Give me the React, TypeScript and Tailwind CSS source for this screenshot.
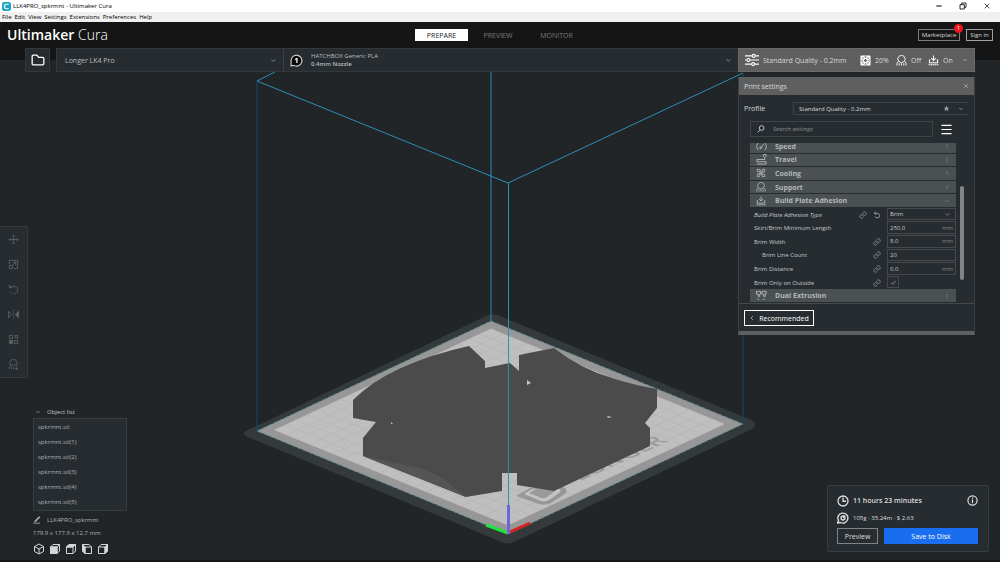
import type { ReactNode } from "react";

type P = { className?: string };

function Svg({ children, className = "size-3" }: { children: ReactNode; className?: string }) {
  return (
    <svg viewBox="0 0 24 24" className={`shrink-0 ${className}`} fill="none" stroke="currentColor" strokeWidth="2" aria-hidden="true">
      {children}
    </svg>
  );
}

const ChevronDown = ({ className = "size-[7px]" }: P) => <Svg className={className}><path d="M5 8l7 7 7-7" /></Svg>;
const ChevronLeft = ({ className = "size-2" }: P) => <Svg className={className}><path d="M16 4l-8 8 8 8" /></Svg>;
const CloseIcon = ({ className = "size-2" }: P) => <Svg className={className}><path d="M5 5l14 14M19 5L5 19" /></Svg>;
const FolderIcon = ({ className }: P) => (
  <Svg className={className}><path d="M2 5.5a2 2 0 0 1 2-2h6l3 4h7a2 2 0 0 1 2 2v9a2 2 0 0 1-2 2H4a2 2 0 0 1-2-2z" strokeWidth="2.2" /></Svg>
);
const SlidersIcon = ({ className }: P) => (
  <Svg className={className}><path d="M0 5h12M18 5h6M0 12h3M9 12h15M0 19h11M17 19h7" /><circle cx="15" cy="5" r="2.6" /><circle cx="6" cy="12" r="2.6" /><circle cx="14" cy="19" r="2.6" /></Svg>
);
const InfillIcon = ({ className }: P) => (
  <Svg className={className}>
    <rect x="1" y="1" width="22" height="22" rx="2" fill="currentColor" stroke="none" />
    <g fill="#5f5f5f" stroke="none"><path d="M12 8l4 4-4 4-4-4zM9 3.500h6l-3 3zM9 20.500h6l-3-3zM3.500 9v6l3-3zM20.500 9v6l-3-3z" /><circle cx="6.500" cy="6.500" r="1.500" /><circle cx="17.500" cy="6.500" r="1.500" /><circle cx="6.500" cy="17.500" r="1.500" /><circle cx="17.500" cy="17.500" r="1.500" /></g>
  </Svg>
);
const SupportIcon = ({ className }: P) => (
  <Svg className={className}><path d="M6 14a8 8 0 1 1 12 0l-6 3zM5 14l-3 4v5M19 14l3 4v5M7 23v-5M12 23v-5M17 23v-5" /></Svg>
);
const AdhesionIcon = ({ className }: P) => (
  <Svg className={className}><path d="M12 1v11M7 7l5 5 5-5M5 11H3v6h18v-6h-2" strokeWidth="2.200" /><path d="M1 21h22M3 19v4M8 19v4M12 19v4M16 19v4M21 19v4" strokeWidth="1.200" /></Svg>
);
const SpeedIcon = ({ className }: P) => (
  <Svg className={className}><path d="M5 20a12 12 0 0 1 0-16M19 20a12 12 0 0 0 0-16M10 15l7-8" /><circle cx="10" cy="15" r="2" /></Svg>
);
const TravelIcon = ({ className }: P) => (
  <Svg className={className}><path d="M16 1h6v4l-3 3-3-3zM2 12h17M19 8v4M2 22h20v-5H2v-5" /></Svg>
);
const FanIcon = ({ className }: P) => (
  <Svg className={className}><circle cx="12" cy="12" r="2.500" /><path d="M10 10L3 8V3l7 1zM14 10l2-7h5l-1 7zM14 14l7 2v5l-7-1zM10 14l-2 7H3l1-7z" /></Svg>
);
const DualIcon = ({ className }: P) => (
  <Svg className={className}><path d="M1 3h9v6H8v5H5V9H1zM13 3h9v6h-2v5h-3V9h-4zM3 20h4M15 20h4" /></Svg>
);
const LinkIcon = ({ className }: P) => (
  <Svg className={className}><path d="M10 13a5 5 0 0 0 7.500.5l3-3a5 5 0 0 0-7-7L11.700 5.200M14 11a5 5 0 0 0-7.500-.5l-3 3a5 5 0 0 0 7 7l1.800-1.700" /></Svg>
);
const ResetIcon = ({ className }: P) => (
  <Svg className={className}><path d="M8 2L4 7l5 4M4 7h9a7 7 0 1 1-7 9" strokeWidth="2.400" /></Svg>
);
const StarIcon = ({ className }: P) => (
  <Svg className={className}><path d="M12 2l3 7 7 .5-5.500 4.500 2 7.500L12 17.500 5.500 21.500l2-7.500L2 9.500 9 9z" fill="currentColor" stroke="none" /></Svg>
);
const ClockIcon = ({ className }: P) => <Svg className={className}><circle cx="12" cy="12" r="10" strokeWidth="2.600" /><path d="M12 5v7.500h6" strokeWidth="2.600" /></Svg>;
const SpoolIcon = ({ className }: P) => (
  <Svg className={className}><path d="M1 22l2-5a10 10 0 1 1 4 4z" strokeWidth="2.800" /><circle cx="12" cy="12" r="4" strokeWidth="2.600" /><path d="M12 12l4-5" strokeWidth="2.600" /></Svg>
);
const InfoIcon = ({ className }: P) => <Svg className={className}><circle cx="12" cy="12" r="10" strokeWidth="2.600" /><path d="M12 10v8M12 5.500v2.500" strokeWidth="2.600" /></Svg>;
const PencilIcon = ({ className }: P) => (
  <Svg className={className}><path d="M5 14L18 1l4 3L9 17l-6 2z" fill="currentColor" stroke="none" /><path d="M1 21.500h20" strokeWidth="2.500" /></Svg>
);

const MoveIcon = ({ className }: P) => (
  <Svg className={className}><path d="M12 3v18M3 12h18M9 5l3-3 3 3M9 19l3 3 3-3M5 9l-3 3 3 3M19 9l3 3-3 3" /></Svg>
);
const ScaleIcon = ({ className }: P) => (
  <Svg className={className}><path d="M3 11V3h18v18h-8M3 14h7v7H3zM11 13l6-6M11 7h6v6" /></Svg>
);
const RotateIcon = ({ className }: P) => (
  <Svg className={className}><path d="M3 2v6h7M4 7c9-5 17 0 17 6 0 5-4 8-8 8" /><path d="M11 21c-4 0-8-3-8-8" strokeDasharray="2 2" /></Svg>
);
const MirrorIcon = ({ className }: P) => (
  <Svg className={className}><path d="M1 5v14l7-7z" /><path d="M23 5v14l-7-7z" fill="currentColor" /><path d="M12 2v20" strokeDasharray="3 2" /></Svg>
);
const MeshIcon = ({ className }: P) => (
  <Svg className={className}><path d="M3 3h7v7H3zM14 14h7v7h-7zM14 3h7v7M14 4l6 6M14 9l2-2" /><path d="M3 14h7v7H3z" fill="currentColor" /></Svg>
);
const BlockerIcon = ({ className }: P) => (
  <Svg className={className}><path d="M6 14a8 8 0 1 1 12 0M3 22v-4l5-5h8l3 3M8 22v-4M12 22v-4" /><path d="M15 21h7M18.500 18v6" /></Svg>
);

function CubeIcon({ face }: { face: "iso" | "front" | "top" | "left" | "right" }) {
  if (face === "iso") {
    return <Svg className="size-3"><path d="M12 2l9 5v10l-9 5-9-5V7zM3 7l9 5 9-5M12 12v10" /></Svg>;
  }
  if (face === "left") {
    return (
      <Svg className="size-3">
        <path d="M3 3h13l5 5v13H8l-5-5zM8 8h13M8 8v13" />
        <path d="M3 3l5 5v13l-5-5z" fill="currentColor" />
      </Svg>
    );
  }
  return (
    <Svg className="size-3">
      <path d="M3 8l5-5h13v13l-5 5H3zM3 8h13v13M16 8l5-5" />
      {face === "front" && <path d="M3 8h13v13H3z" fill="currentColor" />}
      {face === "top" && <path d="M3 8l5-5h13l-5 5z" fill="currentColor" />}
      {face === "right" && <path d="M16 8l5-5v13l-5 5z" fill="currentColor" />}
    </Svg>
  );
}

type Pt = [number, number];
const BED: Pt[] = [[275, 430], [491, 329], [724, 424], [508, 525]];
const mix = (a: Pt, b: Pt, t: number): Pt => [a[0] + (b[0] - a[0]) * t, a[1] + (b[1] - a[1]) * t];

function Scene() {
  const lines: string[] = [];
  const n = 20;
  for (let i = 1; i < n; i++) {
    const t = i / n;
    const [a, b] = [mix(BED[0], BED[1], t), mix(BED[3], BED[2], t)];
    const [c, d] = [mix(BED[0], BED[3], t), mix(BED[1], BED[2], t)];
    lines.push(`M${a}L${b}M${c}L${d}`);
  }
  return (
    <svg viewBox="0 0 1000 562" preserveAspectRatio="xMidYMid slice" className="absolute inset-0 size-full" role="img" aria-label="Build plate with model">
      <path d="M248 430L486 316Q491 313 497 315L751 420Q759 425 752 429L514 542Q508 545 502 542L248 437Q240 433 248 430Z" fill="#34393c" />
      <path d="M257 431L491 321L743 424L508 534Z" fill="#979797" stroke="#5f8590" strokeWidth="1" strokeDasharray="4 2" />
      <path d="M275 430L491 329L724 424L508 525Z" fill="#bfbfbf" stroke="#c9c3c0" strokeWidth="0.6" />
      <path d={lines.join("")} stroke="#b3b3b3" strokeWidth="0.6" />
      <path d="M516 496L530 488L563 487Q569 490 565 494L551 503Q545 506 539 504Z" fill="#989898" />
      <path d="M524 494L532 489L557 488Q563 490 559 493L549 500Q545 502 541 501Z" fill="#c4c4c4" />
      <path d="M529 493L536 489L552 488Q557 490 554 492L547 497Q544 499 541 498Z" fill="#9b9b9b" />
      <text transform="matrix(.92 -.41 .88 .36 580 481)" className="font-['Open_Sans',sans-serif] text-[24px] font-semibold" fill="#9c9c9c">LONGER</text>
      <path d="M353 400Q372 381 401 368Q432 354 469 346L485 361V368L510 363L519 371V355L554 348Q580 369 615 379Q634 385 657 389V408L645 423L650 428V446L554 491L517 485V473H502V491L466 497L363 456V438L376 422L353 418Z" fill="#4b4b4b" />
      <path d="M363 456L395 463Q430 468 447 482L466 497Z" fill="#555" />
      <path d="M527 380l4 3-4 2zM607 416l5 1-4 1zM391 422l2 2h-2z" fill="#c4c4c4" />
      <g fill="none" stroke="#2c8fb5">
        <path d="M275 72L257 81L508 183L743 73" />
        <path d="M257 81V431M743 73V424" stroke="#0e4e63" />
        <path d="M491 60V321M508.500 183V508" />
      </g>
      <path d="M508 533L486 525" stroke="#23e33a" strokeWidth="3" />
      <path d="M508 533L530 523" stroke="#d81f22" strokeWidth="3" />
      <path d="M508.500 505V534" stroke="#6a67dc" strokeWidth="3" />
    </svg>
  );
}

function TitleBar() {
  return (
    <div className="relative flex h-3 items-center bg-white pl-0.5 text-[6px] text-black">
      <svg viewBox="0 0 16 16" className="mr-0.5 size-[9px]" aria-hidden="true">
        <rect width="16" height="16" rx="4" fill="#18a6c4" />
        <path d="M12 4H7L4.500 6v4L7 12h5" stroke="#fff" strokeWidth="2.200" fill="none" />
      </svg>
      <span className="flex-1">LLK4PRO_spkrmnt - Ultimaker Cura</span>
      <div className="flex gap-4 pr-[9px]">
        <button aria-label="Minimise" className="size-2"><Svg className="size-2"><path d="M4 12h16" strokeWidth="3" /></Svg></button>
        <button aria-label="Restore" className="size-2"><Svg className="size-2"><path d="M3 8h13v13H3zM8 8V3h13v13h-5" strokeWidth="2.500" /></Svg></button>
        <button aria-label="Close" className="size-2"><CloseIcon /></button>
      </div>
    </div>
  );
}

function MenuBar() {
  return (
    <nav className="relative flex h-[10px] items-center gap-[3px] bg-[#f0f0f0] pl-0.5 text-[6px] text-black">
      {["File", "Edit", "View", "Settings", "Extensions", "Preferences", "Help"].map((m) => (
        <button key={m}>{m}</button>
      ))}
    </nav>
  );
}

function Header() {
  return (
    <header className="relative grid h-[26px] grid-cols-[1fr_auto_1fr] items-center bg-[#151515] px-[7px] text-[7px]">
      <h1 className="text-[14px] leading-none font-light text-white"><b className="font-semibold">Ultimaker</b> Cura</h1>
      <div className="flex text-[#7c7c7c]">
        <button className="h-3 w-[53px] bg-white text-[#222]">PREPARE</button>
        <button className="h-3 w-[60px]">PREVIEW</button>
        <button className="h-3 w-[57px]">MONITOR</button>
      </div>
      <div className="flex justify-end gap-1.5 text-[6px] text-[#d6d6d6]">
        <button className="relative h-3 w-[42px] border border-[#7d7d7d]">
          Marketplace
          <span className="absolute -top-1.5 -right-1 size-[9px] rounded-full bg-[#e9151b] text-center leading-[9px] text-white">1</span>
        </button>
        <button className="h-3 w-[27px] border border-[#a0a0a0]">Sign in</button>
      </div>
    </header>
  );
}

function StageBar() {
  return (
    <div className="relative flex h-6 bg-[linear-gradient(#151515_50%,transparent_50%)] px-[25px] text-[7px] text-[#b9bdbf]">
      <button aria-label="Open file" className="mr-1.5 flex w-[25px] items-center justify-center border border-[#34383b] bg-[#272c30] text-white">
        <FolderIcon className="size-[14px]" />
      </button>
      <div className="flex flex-1 border-y border-l border-[#34383b] bg-[#272c30]">
        <button className="flex w-1/3 items-center justify-between border-r border-[#3c4043] pr-1.5 pl-2 text-left">
          Longer LK4 Pro <ChevronDown />
        </button>
        <button className="flex flex-1 items-center pr-1.5 pl-1.5 text-left text-[6px]">
          <svg viewBox="0 0 24 24" className="mr-2 size-[13px]" aria-hidden="true">
            <path d="M2 22V12a10 10 0 1 1 5 9z" fill="#080808" stroke="#d8d8d8" strokeWidth="2" />
            <text x="12" y="17" textAnchor="middle" fill="#fff" className="text-[14px] font-bold">1</text>
          </svg>
          <span className="flex-1 leading-2">HATCHBOX Generic PLA<br /><b className="font-semibold">0.4mm Nozzle</b></span>
          <ChevronDown />
        </button>
      </div>
      <button className="flex w-[237px] items-center border border-[#6a6a6a] bg-[#5f5f5f] px-1.5 text-left text-[#d9d9d9]">
        <SlidersIcon className="mr-1 size-[14px] text-white" />
        <span className="flex-1">Standard Quality - 0.2mm</span>
        <InfillIcon className="mr-1 size-[11px] text-white" /><span className="w-[21px]">20%</span>
        <SupportIcon className="mr-1 size-[11px] text-white" /><span className="w-[17px]">Off</span>
        <AdhesionIcon className="mr-1 size-[11px] text-white" /><span className="w-[19px]">On</span>
        <ChevronDown className="size-[6px]" />
      </button>
    </div>
  );
}

function Category({ icon, name, open = false }: { icon: ReactNode; name: string; open?: boolean }) {
  return (
    <div className="pb-px">
      <button className="flex size-full items-center bg-[#4b5052] pr-1.5 pl-1.5 text-left text-[7px] font-bold text-[#b4b8ba]">
        <span className="w-[19px]">{icon}</span>
        <span className="flex-1">{name}</span>
        {open ? <ChevronDown className="size-[6px] text-[#8b9092]" /> : <ChevronLeft className="size-[6px] text-[#8b9092]" />}
      </button>
    </div>
  );
}

function SettingRow({ id, label, icons, indent = false, italic = false, children }: {
  id: string; label: string; icons?: ReactNode; indent?: boolean; italic?: boolean; children: ReactNode;
}) {
  return (
    <div className="flex items-center pl-1 text-[6px] text-[#c6c9cb]">
      <label htmlFor={id} className={`flex-1 ${indent ? "pl-2" : ""} ${italic ? "italic" : ""}`}>{label}</label>
      <span className="mr-1.5 flex gap-1.5 text-[#a9adaf]">{icons}</span>
      <div className="flex h-full w-[69px] pb-px">{children}</div>
    </div>
  );
}

function Value({ id, value, unit }: { id: string; value: string; unit?: string }) {
  return (
    <div className="flex w-full items-center border border-[#45494c] px-0.5">
      <input id={id} defaultValue={value} className="w-0 flex-1 bg-transparent outline-none" />
      {unit && <span className="text-[#84888a]">{unit}</span>}
    </div>
  );
}

function SettingsPanel() {
  const link = <LinkIcon className="size-2" />;
  return (
    <section className="w-[237px] border border-[#3c4043] border-t-0 border-b-4 border-b-[#5f5f5f] bg-[#272c30] text-[7px] text-[#d8dadb]">
      <div className="flex h-[18px] items-center justify-between bg-[#5f5f5f] px-[5px]">
        <h2>Print settings</h2>
        <button aria-label="Close print settings"><CloseIcon className="size-[6px]" /></button>
      </div>
      <div className="mt-[7px] flex h-[13px] items-center pr-1.5 pl-[5px]">
        <label htmlFor="profile" className="w-[49px]">Profile</label>
        <div className="flex h-full flex-1 items-center border border-r-0 border-[#3f4346] pr-1">
          <select id="profile" className="flex-1 appearance-none bg-transparent pl-[5px] text-[6px] outline-none">
            <option>Standard Quality - 0.2mm</option>
          </select>
          <StarIcon className="mr-2 size-[7px] text-[#9a9ea0]" />
          <ChevronDown className="size-[6px]" />
        </div>
      </div>
      <div className="mt-1.5 flex h-4 items-center pr-[22px] pl-[11px]">
        <div className="flex h-full flex-1 items-center border border-[#3f4346] px-1.5">
          <Svg className="mr-2 size-2"><circle cx="14" cy="9" r="7" strokeWidth="2.500" /><path d="M9 15l-7 7" strokeWidth="2.500" /></Svg>
          <input aria-label="Search settings" placeholder="Search settings" className="w-0 flex-1 bg-transparent text-[6px] italic outline-none placeholder:text-[#8d9193]" />
        </div>
        <button aria-label="Setting visibility" className="ml-2 text-white"><Svg className="size-[11px]"><path d="M1 3h22M1 12h22M1 21h22" strokeWidth="2.500" /></Svg></button>
      </div>
      <div className="mt-1.5 flex pl-[11px]">
        <div className="flex h-[160px] w-[206px] flex-col justify-end overflow-hidden">
          <div className="grid h-[163px] shrink-0 auto-rows-fr">
            <Category icon={<SpeedIcon className="size-[11px]" />} name="Speed" />
            <Category icon={<TravelIcon className="size-[11px]" />} name="Travel" />
            <Category icon={<FanIcon className="size-[10px]" />} name="Cooling" />
            <Category icon={<SupportIcon className="size-[10px]" />} name="Support" />
            <Category icon={<AdhesionIcon className="size-[10px]" />} name="Build Plate Adhesion" open />
            <SettingRow id="type" label="Build Plate Adhesion Type" italic icons={<>{link}<ResetIcon className="size-2" /></>}>
              <div className="flex w-full items-center border border-[#45494c] pr-1 pl-0.5">
                <select id="type" className="flex-1 appearance-none bg-transparent outline-none"><option>Brim</option></select>
                <ChevronDown className="size-[7px] text-[#a9adaf]" />
              </div>
            </SettingRow>
            <SettingRow id="minlen" label="Skirt/Brim Minimum Length"><Value id="minlen" value="250.0" unit="mm" /></SettingRow>
            <SettingRow id="width" label="Brim Width" icons={link}><Value id="width" value="8.0" unit="mm" /></SettingRow>
            <SettingRow id="count" label="Brim Line Count" indent icons={link}><Value id="count" value="20" /></SettingRow>
            <SettingRow id="distance" label="Brim Distance" icons={link}><Value id="distance" value="0.0" unit="mm" /></SettingRow>
            <SettingRow id="outside" label="Brim Only on Outside" icons={link}>
              <span className="relative flex w-3 items-center justify-center border border-[#45494c]">
                <input id="outside" type="checkbox" defaultChecked className="absolute inset-0 size-full appearance-none" />
                <Svg className="size-[7px]"><path d="M4 12l5 6L20 6" /></Svg>
              </span>
            </SettingRow>
            <Category icon={<DualIcon className="size-[11px]" />} name="Dual Extrusion" />
          </div>
        </div>
        <div className="mt-[43px] ml-1 h-[94px] w-1 rounded-full bg-[#808486]" />
      </div>
      <div className="border-t border-[#45494c] px-[5px] pt-1.5 pb-[5px]">
        <button className="flex h-4 w-[70px] items-center justify-center gap-1 border border-white text-white">
          <ChevronLeft className="size-[6px]" /> Recommended
        </button>
      </div>
    </section>
  );
}

function Toolbar() {
  const tools: [string, ReactNode][] = [
    ["Move", <MoveIcon className="size-[11px]" />],
    ["Scale", <ScaleIcon className="size-[11px]" />],
    ["Rotate", <RotateIcon className="size-[11px]" />],
    ["Mirror", <MirrorIcon className="size-[11px]" />],
    ["Per model settings", <MeshIcon className="size-[11px]" />],
    ["Support blocker", <BlockerIcon className="size-[11px]" />],
  ];
  return (
    <div className="flex w-7 flex-col border border-l-0 border-[#34393c] bg-[#272c30] text-[#5d6265]">
      {tools.map(([name, icon]) => (
        <button key={name} aria-label={name} className="flex h-[25px] items-center justify-center">{icon}</button>
      ))}
    </div>
  );
}

function ObjectList() {
  return (
    <section className="ml-[33px] w-[94px] text-[6px] text-[#adb1b3]">
      <button className="flex h-3 items-center gap-1.5 pl-0.5 text-[#c4c7c9]"><ChevronDown className="size-[6px]" /> Object list</button>
      <ul className="flex h-[93px] flex-col border border-[#383d40] bg-[#272c30]">
        {["spkrmnt.stl", "spkrmnt.stl(1)", "spkrmnt.stl(2)", "spkrmnt.stl(3)", "spkrmnt.stl(4)", "spkrmnt.stl(5)"].map((o) => (
          <li key={o} className="flex flex-1 items-center pl-1">{o}</li>
        ))}
      </ul>
      <div className="mt-[3px] flex h-3 items-center gap-1.5"><PencilIcon className="size-2" /> LLK4PRO_spkrmnt</div>
      <p className="mt-px h-3 leading-3">179.9 x 177.9 x 12.7 mm</p>
      <div className="mt-1 flex gap-1 text-[#d4d7d8]">
        {(["iso", "front", "top", "left", "right"] as const).map((f) => (
          <button key={f} aria-label={`${f} view`}><CubeIcon face={f} /></button>
        ))}
      </div>
    </section>
  );
}

function JobCard() {
  return (
    <section className="mr-[11px] w-[162px] rounded-xs border border-[#383d40] bg-[#272c30] pt-2 pr-2.5 pb-[7px] pl-[9px] text-[7px] text-[#dcdedf]">
      <div className="flex h-[13px] items-center gap-1"><ClockIcon className="size-3" /><b className="flex-1 font-semibold">11 hours 23 minutes</b><InfoIcon className="size-[11px]" /></div>
      <div className="mt-1 flex h-[13px] items-center gap-1 text-[6px]"><SpoolIcon className="size-3" /> 105g · 35.24m · $ 2.63</div>
      <div className="mt-1 flex h-4 gap-1.5">
        <button className="w-[41px] border border-[#808486]">Preview</button>
        <button className="flex-1 bg-[#196ef0] text-white">Save to Disk</button>
      </div>
    </section>
  );
}

export default function App() {
  return (
    <div className="relative flex min-h-screen flex-col overflow-hidden bg-[#212528] font-['Open_Sans','Noto_Sans',sans-serif] leading-none">
      <Scene />
      <TitleBar />
      <MenuBar />
      <Header />
      <StageBar />
      <main className="relative flex flex-1 justify-between">
        <div className="flex flex-col justify-end pb-[5px]">
          <Toolbar />
          <div className="mt-7"><ObjectList /></div>
        </div>
        <div className="flex flex-col items-end justify-between pt-[5px] pb-2">
          <div className="mr-[25px]"><SettingsPanel /></div>
          <JobCard />
        </div>
      </main>
      <div className="relative h-0.5 bg-[#17141c]" />
    </div>
  );
}
